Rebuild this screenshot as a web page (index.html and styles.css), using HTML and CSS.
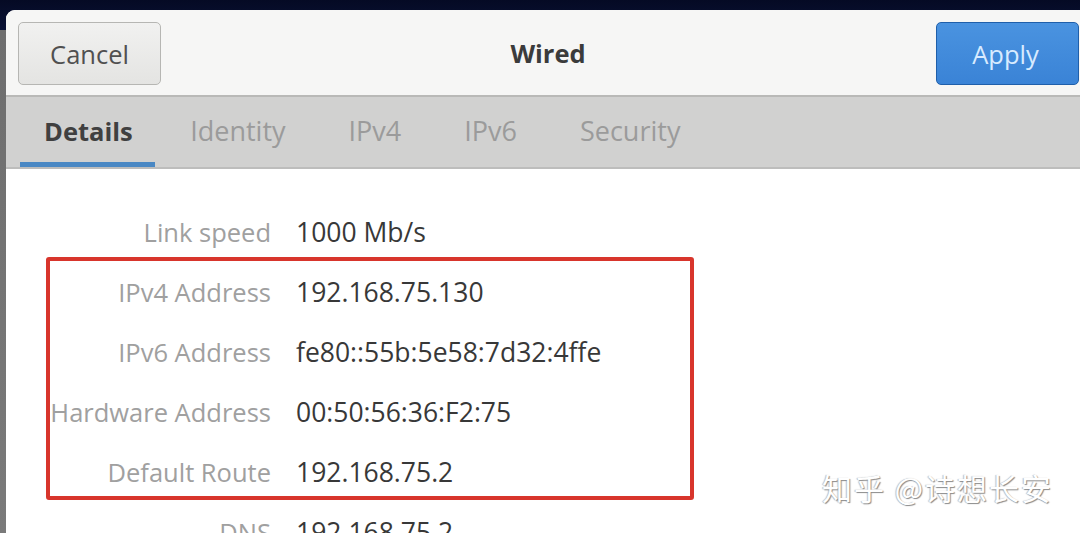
FILE: index.html
```html
<!DOCTYPE html>
<html>
<head>
<meta charset="utf-8">
<link rel="stylesheet" href="styles.css">
</head>
<body>
<div class="desk">
  <div class="window">
    <header class="header">
      <button class="btn btn-cancel">Cancel</button>
      <div class="title">Wired</div>
      <button class="btn btn-apply">Apply</button>
    </header>
    <nav class="tabs">
      <div class="tab active">Details</div>
      <div class="tab">Identity</div>
      <div class="tab">IPv4</div>
      <div class="tab">IPv6</div>
      <div class="tab">Security</div>
    </nav>
    <main class="content">
      <div class="grid">
        <div class="label">Link speed</div><div class="value">1000 Mb/s</div>
        <div class="label">IPv4 Address</div><div class="value">192.168.75.130</div>
        <div class="label">IPv6 Address</div><div class="value">fe80::55b:5e58:7d32:4ffe</div>
        <div class="label">Hardware Address</div><div class="value">00:50:56:36:F2:75</div>
        <div class="label">Default Route</div><div class="value">192.168.75.2</div>
        <div class="label">DNS</div><div class="value">192.168.75.2</div>
      </div>
      <div class="highlight"></div>
      <div class="watermark">知乎 @诗想长安</div>
    </main>
  </div>
</div>
</body>
</html>
```
FILE: styles.css
```css
html, body {
  margin: 0;
  padding: 0;
  height: 100%;
  overflow: hidden;
}
body {
  background: linear-gradient(to bottom, #050a24 0, #0a1236 30px, #6e6e6e 30px, #7a7a7a 100%);
  font-family: "Open Sans", "Noto Sans", sans-serif;
}
.desk {
  padding: 10px 0 0 6px;
  height: 100%;
  box-sizing: border-box;
}
.window {
  background: #fff;
  border-top-left-radius: 9px;
  height: 100%;
  overflow: hidden;
  display: flex;
  flex-direction: column;
}
.header {
  height: 87px;
  flex: none;
  background: #f6f6f5;
  border-bottom: 2px solid #b9b9b7;
  display: flex;
  align-items: center;
  justify-content: space-between;
  padding: 0 0 0 12px;
  box-sizing: border-box;
  position: relative;
}
.btn {
  font-family: inherit;
  font-size: 25.5px;
  height: 63px;
  border-radius: 5px;
  margin-top: 2px;
}
.btn-cancel {
  width: 143px;
  color: #505050;
  background: linear-gradient(#f1f1f0, #e4e4e2);
  border: 1.5px solid #b6b6b3;
}
.btn-apply {
  width: 143px;
  color: #d8ebff;
  background: linear-gradient(#4a93e0, #3a83d6);
  border: 1.5px solid #1f5faa;
  margin-right: 1px;
  padding-right: 10px;
}
.title {
  position: absolute;
  left: 0;
  right: 0;
  text-align: center;
  font-size: 25.5px;
  font-weight: 700;
  color: #3b3b3b;
  pointer-events: none;
  padding-left: 10px;
}
.tabs {
  height: 72px;
  flex: none;
  background: #d1d1d0;
  border-bottom: 2px solid #bdbdbc;
  display: flex;
  align-items: stretch;
  padding-left: 14px;
  box-sizing: border-box;
}
.tab {
  font-size: 27px;
  color: #9b9b9b;
  font-weight: 500;
  display: flex;
  align-items: center;
  padding: 0 31.5px;
  border-bottom: 5px solid transparent;
  padding-top: 2px;
}
.tab.active {
  color: #404040;
  font-weight: 700;
  font-size: 25.5px;
  border-bottom-color: #4a88c4;
  padding: 2px 22px 0 24px;
  margin-right: 4px;
}
.content {
  flex: 1;
  position: relative;
  background: #fff;
}
.grid {
  display: grid;
  grid-template-columns: 265px auto;
  grid-auto-rows: 60px;
  column-gap: 25px;
  padding-top: 33px;
}
.label {
  font-size: 25.5px;
  color: #a0a0a0;
  display: flex;
  align-items: center;
  justify-content: flex-end;
}
.value {
  font-size: 26.5px;
  color: #383838;
  display: flex;
  align-items: center;
}
.highlight {
  position: absolute;
  left: 40px;
  top: 88px;
  width: 648px;
  height: 243px;
  border: 4px solid #d8352c;
  border-radius: 3px;
  box-sizing: border-box;
}
.watermark {
  position: absolute;
  left: 816px;
  top: 296px;
  font-family: "Noto Sans CJK SC", sans-serif;
  font-size: 30px;
  color: #fff;
  text-shadow: 1px 1px 1px #8a8a8a, -1px 0 1px #bdbdbd;
  letter-spacing: 2px;
}
```
